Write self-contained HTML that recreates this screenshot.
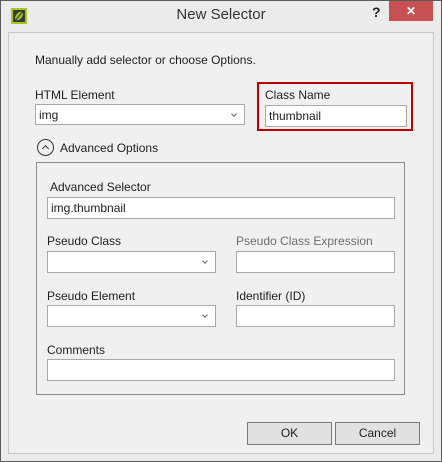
<!DOCTYPE html>
<html><head><style>
*{box-sizing:border-box;margin:0;padding:0}
body{width:442px;height:462px;position:relative;background:#ebebeb;font-family:"Liberation Sans",sans-serif;font-size:12px;color:#1e1e1e;overflow:hidden}
.a{position:absolute}
.frame{left:0;top:0;width:442px;height:462px;border:1px solid #5a5a5a}
.panel{left:8px;top:32px;width:426px;height:422px;border:1px solid #c8c8c8;background:#f0f0f0}
.in{position:absolute;background:#fff;border:1px solid #a8a8a8;height:22px;padding:3px 3px;font-size:12px}
.sel::after{content:"";position:absolute;right:8px;top:7px;width:3px;height:3px;border-right:1px solid #666;border-bottom:1px solid #666;transform:rotate(45deg)}
.lbl{position:absolute;font-size:12px}
.btn{position:absolute;background:#e1e1e1;border:1px solid #7a7a7a;height:23px;text-align:center;line-height:21px}
</style></head><body>
<div class="a frame"></div>
<div class="a" style="left:11px;top:8px;width:16px;height:16px;border:2px solid #a8c81e;background:#3a3a3a"></div>
<svg class="a" style="left:13px;top:10px" width="12" height="12"><ellipse cx="6" cy="6" rx="3" ry="5" transform="rotate(40 6 6)" fill="#a8c81e"/><line x1="2" y1="11" x2="10" y2="1" stroke="#3a3a3a" stroke-width="1.2"/></svg>
<div class="a" style="left:0;width:442px;top:6px;text-align:center;font-size:15px;color:#333">New Selector</div>
<div class="a" style="left:372px;top:4px;font-size:14px;font-weight:bold;color:#222">?</div>
<div class="a" style="left:389px;top:1px;width:44px;height:20px;background:#c75050;color:#fff;text-align:center;font-size:12px;line-height:20px;font-weight:bold">✕</div>
<div class="a panel"></div>
<div class="lbl" style="left:35px;top:53px">Manually add selector or choose Options.</div>
<div class="lbl" style="left:35px;top:88px">HTML Element</div>
<div class="in sel" style="left:35px;top:104px;width:210px;height:21px">img</div>
<div class="a" style="left:257px;top:82px;width:156px;height:49px;border:2px solid #c00000"></div>
<div class="lbl" style="left:265px;top:88px">Class Name</div>
<div class="in" style="left:265px;top:105px;width:142px">thumbnail</div>
<div class="a" style="left:37px;top:139px;width:17px;height:17px;border:1.5px solid #333;border-radius:50%"></div>
<div class="a" style="left:43px;top:146px;width:5px;height:5px;border-left:1.5px solid #333;border-top:1.5px solid #333;transform:rotate(45deg)"></div>
<div class="lbl" style="left:60px;top:141px">Advanced Options</div>
<div class="a" style="left:36px;top:162px;width:369px;height:233px;border:1px solid #8a8a8a"></div>
<div class="lbl" style="left:50px;top:180px">Advanced Selector</div>
<div class="in" style="left:47px;top:197px;width:348px">img.thumbnail</div>
<div class="lbl" style="left:47px;top:234px">Pseudo Class</div>
<div class="in sel" style="left:47px;top:251px;width:169px"></div>
<div class="lbl" style="left:236px;top:234px;color:#6d6d6d">Pseudo Class Expression</div>
<div class="in" style="left:236px;top:251px;width:159px"></div>
<div class="lbl" style="left:47px;top:289px">Pseudo Element</div>
<div class="in sel" style="left:47px;top:305px;width:169px"></div>
<div class="lbl" style="left:236px;top:289px">Identifier (ID)</div>
<div class="in" style="left:236px;top:305px;width:159px"></div>
<div class="lbl" style="left:47px;top:343px">Comments</div>
<div class="in" style="left:47px;top:359px;width:348px"></div>
<div class="btn" style="left:247px;top:422px;width:85px">OK</div>
<div class="btn" style="left:335px;top:422px;width:85px">Cancel</div>
</body></html>
